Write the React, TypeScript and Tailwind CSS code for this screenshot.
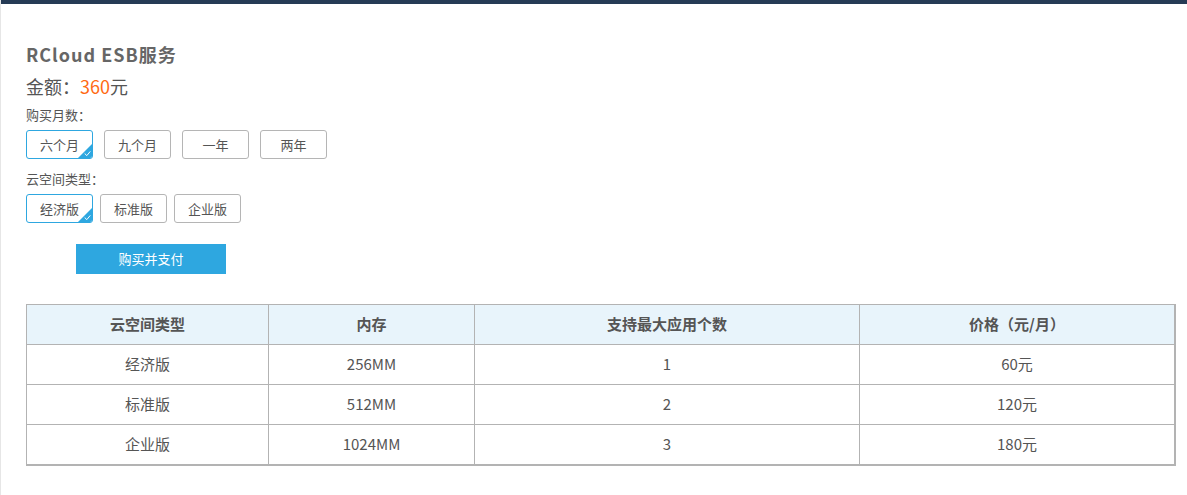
import React from "react";

const FONT = '"Microsoft YaHei", "Noto Sans CJK SC", "Noto Sans", sans-serif';

const months = ["六个月", "九个月", "一年", "两年"];
const kinds = ["经济版", "标准版", "企业版"];

const rows = [
  { kind: "经济版", mem: "256MM", apps: "1", price: "60元" },
  { kind: "标准版", mem: "512MM", apps: "2", price: "120元" },
  { kind: "企业版", mem: "1024MM", apps: "3", price: "180元" },
];

// 선택된 옵션 버튼 — 오른쪽 아래 파란 삼각형 + 체크
function Option({ label, active }: { label: string; active?: boolean }) {
  return (
    <button
      className={`relative h-[29px] w-[67px] overflow-hidden rounded-[3px] border bg-white text-[13px] text-[#555] ${
        active ? "border-[#2ea7e0]" : "border-[#b5b5b5]"
      }`}
    >
      {label}
      {active && (
        <span className="absolute bottom-0 right-0 h-0 w-0 border-b-[14px] border-l-[14px] border-b-[#2ea7e0] border-l-transparent">
          <svg
            viewBox="0 0 10 10"
            className="absolute left-[-8px] top-[6px] h-[7px] w-[7px]"
            fill="none"
            stroke="white"
            strokeWidth="1.4"
          >
            <polyline points="1 5 4 8 9 2" />
          </svg>
        </span>
      )}
    </button>
  );
}

export default function App() {
  return (
    <div className="min-h-[495px] w-full border-l border-[#e6e6e6] bg-white" style={{ fontFamily: FONT }}>
      <div className="h-[4px] bg-[#263b55]" />
      <div className="pl-[25px] pr-[11px] pt-[38px]">
        <h1 className="text-[18px] font-bold leading-[24px] tracking-[1px] text-[#666]">RCloud ESB服务</h1>
        <div className="mt-[9px] text-[18px] leading-[23px] text-[#555]">
          金额：<span className="text-[#ff6a13]">360</span>元
        </div>
        <div className="mt-[8px] text-[13px] leading-[18px] text-[#555]">购买月数：</div>
        <div className="mt-[6px] flex gap-[11px]">
          {months.map((m, i) => (
            <Option key={m} label={m} active={i === 0} />
          ))}
        </div>
        <div className="mt-[11px] text-[13px] leading-[18px] text-[#555]">云空间类型：</div>
        <div className="mt-[6px] flex gap-[7px]">
          {kinds.map((k, i) => (
            <Option key={k} label={k} active={i === 0} />
          ))}
        </div>
        <button className="ml-[50px] mt-[21px] h-[30px] w-[150px] bg-[#2ea7e0] text-[13px] text-white">
          购买并支付
        </button>

        <table className="mt-[30px] w-[1150px] table-fixed border-collapse border-b-2 border-r-2 border-[#b3b3b3] text-[15px] text-[#555]">
          <colgroup>
            <col className="w-[242px]" />
            <col className="w-[206px]" />
            <col className="w-[385px]" />
            <col />
          </colgroup>
          <thead>
            <tr className="h-[40px] bg-[#e8f4fb] font-bold">
              <th className="border border-[#b3b3b3]">云空间类型</th>
              <th className="border border-[#b3b3b3]">内存</th>
              <th className="border border-[#b3b3b3]">支持最大应用个数</th>
              <th className="border border-[#b3b3b3]">价格（元/月）</th>
            </tr>
          </thead>
          <tbody>
            {rows.map((r) => (
              <tr key={r.kind} className="h-[40px] text-center">
                <td className="border border-[#b3b3b3]">{r.kind}</td>
                <td className="border border-[#b3b3b3]">{r.mem}</td>
                <td className="border border-[#b3b3b3]">{r.apps}</td>
                <td className="border border-[#b3b3b3]">{r.price}</td>
              </tr>
            ))}
          </tbody>
        </table>
      </div>
    </div>
  );
}
